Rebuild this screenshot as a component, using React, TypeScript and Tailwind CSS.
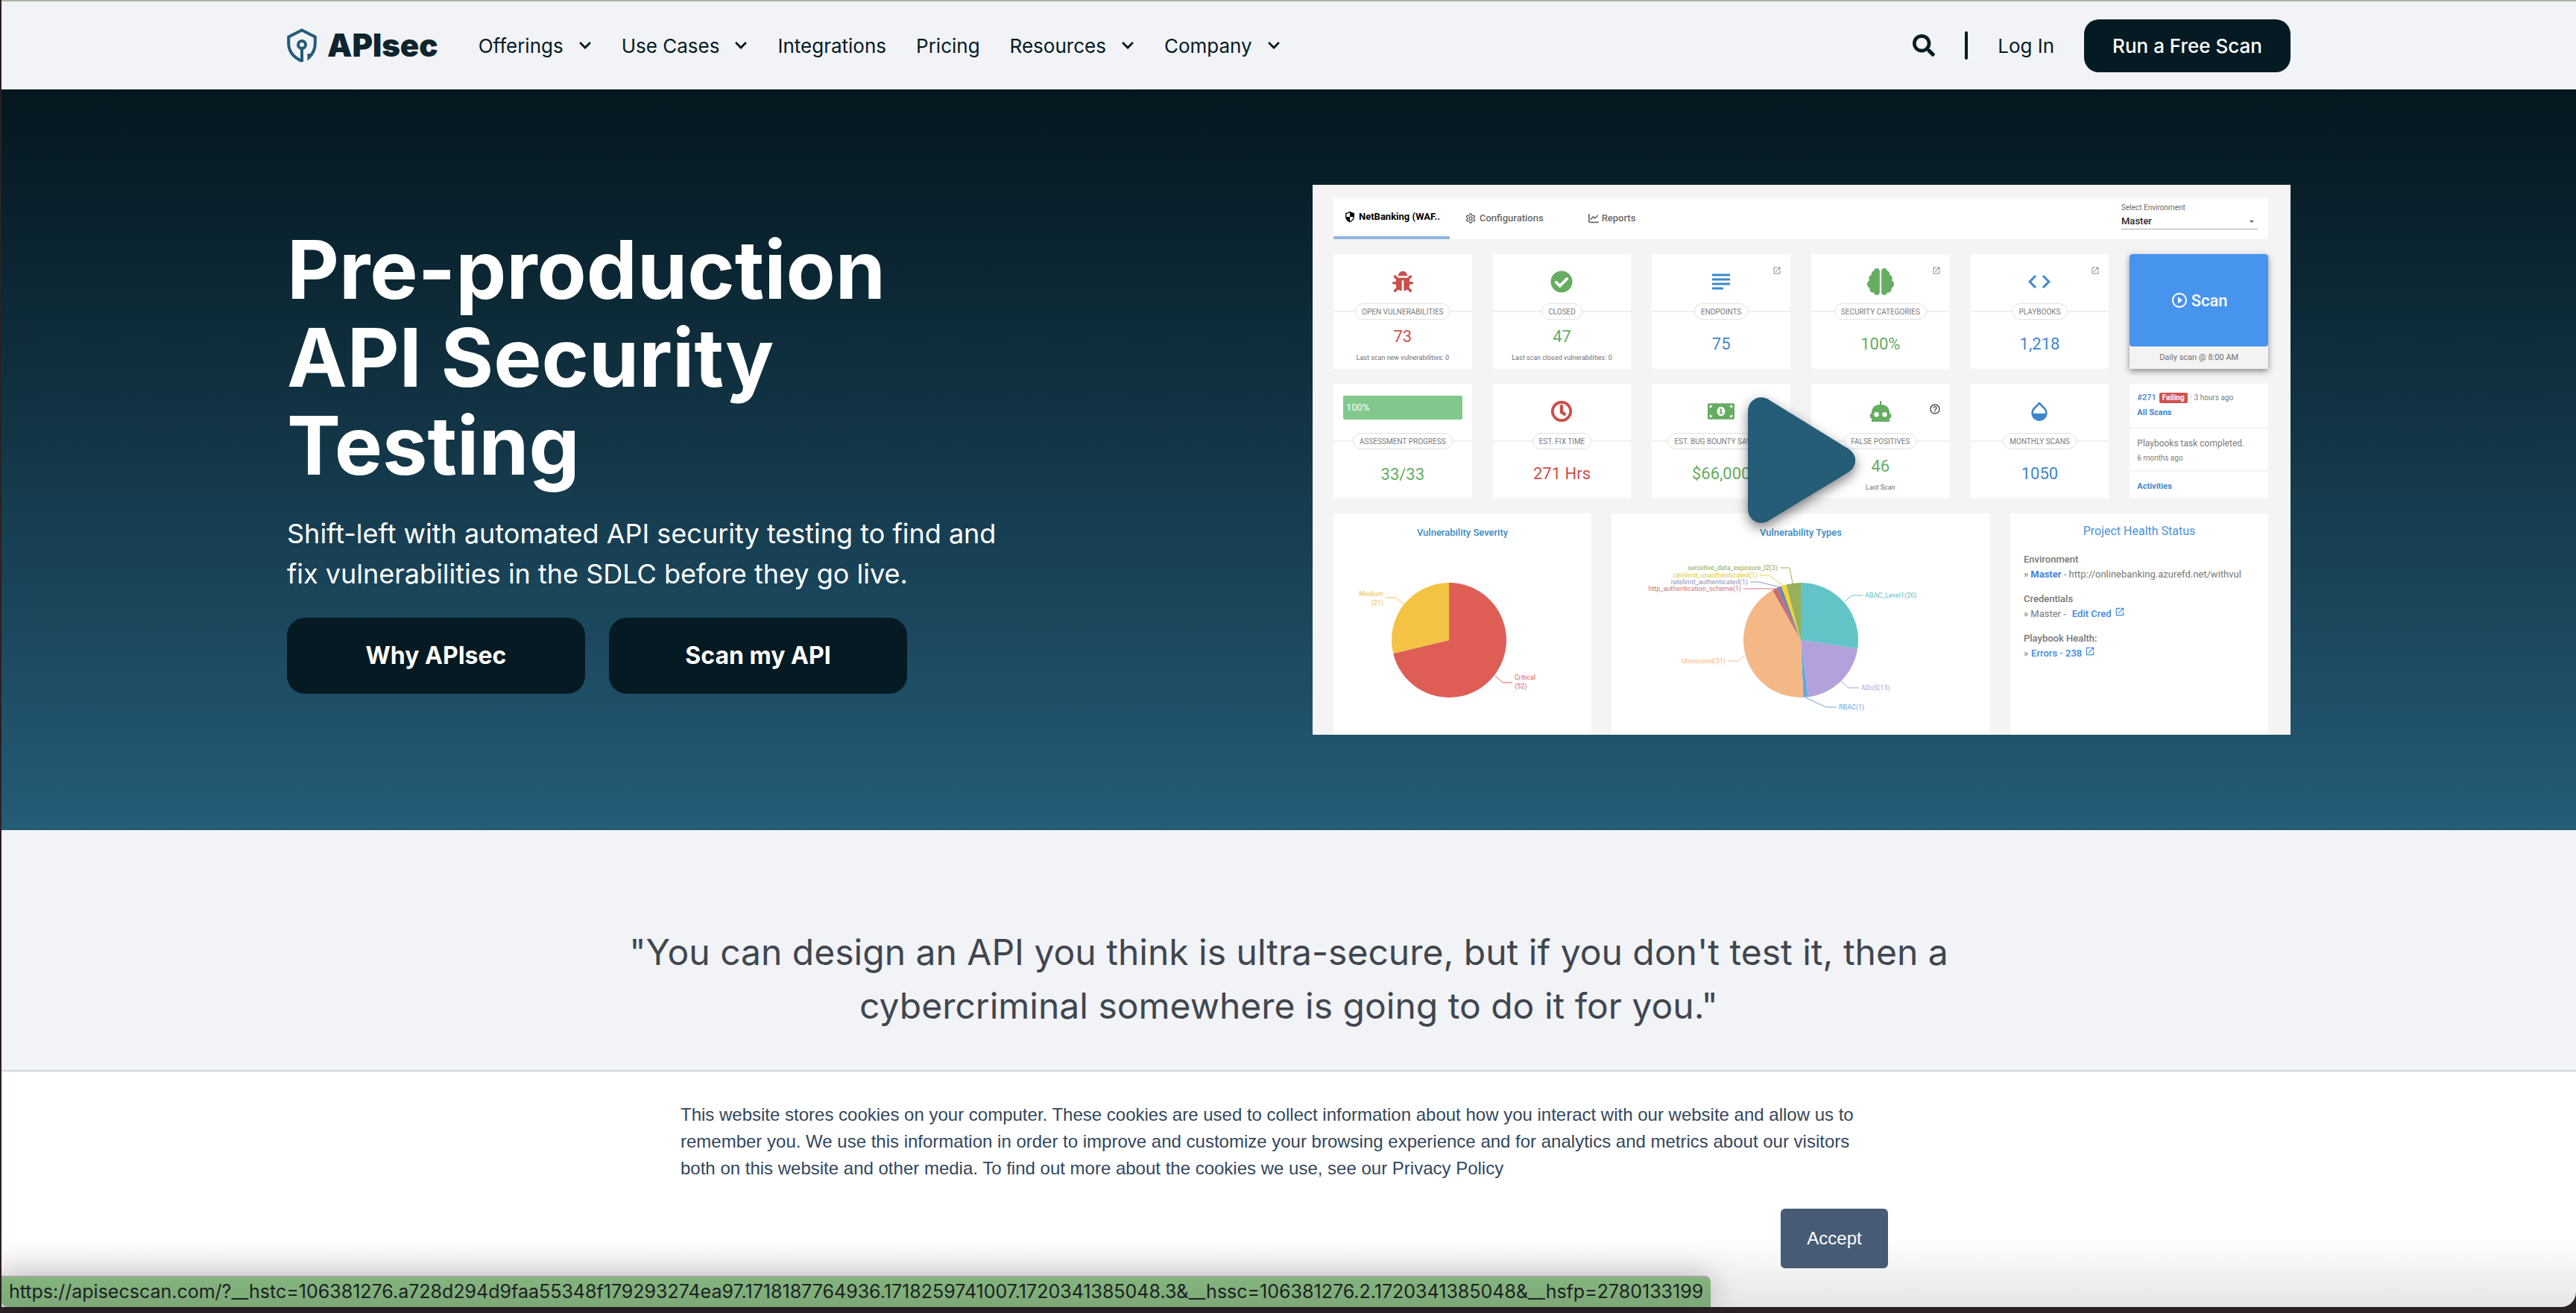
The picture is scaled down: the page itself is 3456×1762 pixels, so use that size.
import type { ReactNode } from "react";
import { FaBug, FaCheckCircle, FaRegClock, FaMoneyBillAlt, FaChevronDown, FaSearch } from "react-icons/fa";
import {
  MdSubject,
  MdCode,
  MdOpacity,
  MdOpenInNew,
  MdSecurity,
  MdOutlineSettings,
  MdHelpOutline,
  MdPlayCircleOutline,
  MdArrowDropDown,
} from "react-icons/md";
import { FaBrain, FaChartLine } from "react-icons/fa6";

const NAV = [
  { label: "Offerings", menu: true },
  { label: "Use Cases", menu: true },
  { label: "Integrations", menu: false },
  { label: "Pricing", menu: false },
  { label: "Resources", menu: true },
  { label: "Company", menu: true },
];

function Logo() {
  return (
    <a href="#" className="flex items-center gap-3.5 text-[#0f242d]">
      <svg viewBox="0 0 40 46" className="h-[46px] w-10" fill="none" stroke="#245b78" strokeWidth="4">
        <path d="M20 44C9 39 2.2 31 2.2 20V11.500L20 2.500L37.800 11.500V20C37.800 29 34 35 29.500 39V34" />
        <circle cx="20" cy="22" r="5" />
        <path d="M20 27V45" />
      </svg>
      <span className="text-[42px] leading-none font-black">APIsec</span>
    </a>
  );
}

function Header() {
  return (
    <header className="border-t-2 border-[#a6b7a2] bg-[#f1f3f7]">
      <div className="mx-auto flex h-[118px] max-w-[2688px] items-center text-[26px] text-[#051a22]">
        <Logo />
        <nav className="ml-[54px] flex items-center gap-10">
          {NAV.map((item) =>
            item.menu ? (
              <button key={item.label} className="flex items-center gap-5">
                {item.label}
                <FaChevronDown className="size-[18px]" />
              </button>
            ) : (
              <a key={item.label} href="#">
                {item.label}
              </a>
            ),
          )}
        </nav>
        <div className="ml-auto flex items-center gap-10">
          <button aria-label="Search">
            <FaSearch className="size-[30px]" />
          </button>
          <span className="h-[38px] w-1 rounded-full bg-[#051a22]" />
          <a href="#">Log In</a>
          <button className="h-[71px] rounded-[20px] bg-[#051a22] px-[38px] font-medium text-white">
            Run a Free Scan
          </button>
        </div>
      </div>
    </header>
  );
}

const GREEN = "text-[#66ad61]";
const RED = "text-[#c9504b]";
const BLUE = "text-[#3f87cc]";

function CardLabel({ children }: { children: ReactNode }) {
  return (
    <div className="flex items-center">
      <span className="h-0.5 flex-1 bg-[#efefef]" />
      <span className="flex h-[22px] items-center rounded-full border border-[#e2e2e2] px-2 text-[10px] whitespace-nowrap text-[#7b7b7b]">
        {children}
      </span>
      <span className="h-0.5 flex-1 bg-[#efefef]" />
    </div>
  );
}

function StatCard({
  icon,
  label,
  value,
  tone,
  note,
  corner,
}: {
  icon: ReactNode;
  label: string;
  value: string;
  tone: string;
  note?: string;
  corner?: ReactNode;
}) {
  return (
    <div className="relative flex flex-col bg-white">
      {corner && <span className="absolute top-4 right-3 text-[#8a8a8a]">{corner}</span>}
      <div className={"flex h-[66px] items-center justify-center pt-2 " + tone}>{icon}</div>
      <CardLabel>{label}</CardLabel>
      <div className="flex h-[66px] flex-col items-center justify-center">
        <span className={"text-[22px] leading-9 " + tone}>{value}</span>
        {note && <span className="text-[9px] leading-5 text-[#6f6f6f]">{note}</span>}
      </div>
    </div>
  );
}

function RobotIcon() {
  return (
    <svg viewBox="0 0 30 28" className="h-7 w-[30px]" fill="currentColor">
      <path
        fillRule="evenodd"
        d="M14 0h2v5h1a10 10 0 0 1 10 9v3h2v6h-2v4a1 1 0 0 1-1 1H4a1 1 0 0 1-1-1v-4H1v-6h2v-3a10 10 0 0 1 10-9h1zM9.500 15a3.200 3.200 0 1 0 0 6.400a3.200 3.200 0 0 0 0-6.400zm11 0a3.200 3.200 0 1 0 0 6.400a3.200 3.200 0 0 0 0-6.400z"
      />
    </svg>
  );
}

type Slice = { value: number; color: string };

function Pie({ cx, cy, r, slices }: { cx: number; cy: number; r: number; slices: Slice[] }) {
  const total = slices.reduce((sum, s) => sum + s.value, 0);
  let from = 0;
  return (
    <g>
      {slices.map((s, i) => {
        const a = (from / total) * 2 * Math.PI;
        from += s.value;
        const b = (from / total) * 2 * Math.PI;
        const large = b - a > Math.PI ? 1 : 0;
        const p = (t: number) => `${cx + r * Math.sin(t)} ${cy - r * Math.cos(t)}`;
        return <path key={i} fill={s.color} d={`M${cx} ${cy}L${p(a)}A${r} ${r} 0 ${large} 1 ${p(b)}Z`} />;
      })}
    </g>
  );
}

function SeverityChart() {
  return (
    <svg viewBox="0 0 346 240" className="w-full" fontSize="9">
      <Pie
        cx={155}
        cy={134}
        r={77}
        slices={[
          { value: 52, color: "#de5e56" },
          { value: 21, color: "#f4c343" },
        ]}
      />
      <g fill="none" strokeWidth="1">
        <path stroke="#f4c343" d="M70 77h14l11 9" />
        <path stroke="#de5e56" d="M217 182l10 9h13" />
      </g>
      <g fill="#ecc04d" textAnchor="end">
        <text x="67" y="75">Medium</text>
        <text x="67" y="87">(21)</text>
      </g>
      <g fill="#de5e56">
        <text x="243" y="187">Critical</text>
        <text x="243" y="199">(52)</text>
      </g>
    </svg>
  );
}

function TypesChart() {
  return (
    <svg viewBox="0 0 508 240" className="w-full" fontSize="9">
      <Pie
        cx={254}
        cy={134}
        r={77}
        slices={[
          { value: 20, color: "#62c4c6" },
          { value: 15, color: "#b2a1da" },
          { value: 1, color: "#67a7e0" },
          { value: 31, color: "#f3b886" },
          { value: 1, color: "#c96a70" },
          { value: 1, color: "#7b83a8" },
          { value: 1, color: "#efd62f" },
          { value: 3, color: "#98b05a" },
        ]}
      />
      <g fill="none" strokeWidth="1">
        <path stroke="#98b05a" d="M226 37h13l4 21" />
        <path stroke="#e5d24a" d="M199 47h12l20 14" />
        <path stroke="#8d93b8" d="M186 56h12l28 7" />
        <path stroke="#d0757b" d="M177 65h44" />
        <path stroke="#f3b886" d="M157 162h13l8-7" />
        <path stroke="#62c4c6" d="M313 82l10-8h14" />
        <path stroke="#b2a1da" d="M308 189l10 9h14" />
        <path stroke="#67a7e0" d="M260 211l28 13h14" />
      </g>
      <g textAnchor="end">
        <text x="223" y="40" fill="#8fa656">sensitive_data_exposure_l2(3)</text>
        <text x="196" y="50" fill="#dccb3c">ratelimit_unauthenticated(1)</text>
        <text x="183" y="59" fill="#8d93b8">ratelimit_authenticated(1)</text>
        <text x="174" y="68" fill="#d0757b">http_authentication_scheme(1)</text>
        <text x="153" y="165" fill="#f0b584">Unsecured(31)</text>
      </g>
      <text x="340" y="77" fill="#5cc0c2">ABAC_Level1(20)</text>
      <text x="335" y="201" fill="#b2a1da">ADoS(15)</text>
      <text x="305" y="227" fill="#67a7e0">RBAC(1)</text>
    </svg>
  );
}

function Dashboard() {
  const open = <MdOpenInNew className="size-3" />;
  return (
    <div className="relative flex aspect-video w-full flex-col overflow-hidden bg-[#f4f4f4] pt-[17px] pr-[30px] pl-7 font-[Roboto,sans-serif]">
      <div className="flex h-14 shrink-0 items-stretch bg-white text-[13px] text-[#6a6a6a]">
        <a href="#" className="flex w-[156px] items-center gap-1 border-b-4 border-[#8fb5de] pl-3.5 font-bold text-black">
          <MdSecurity className="size-4" />
          NetBanking (WAF..
        </a>
        <a href="#" className="ml-5 flex items-center gap-1 font-medium">
          <MdOutlineSettings className="size-4" />
          Configurations
        </a>
        <a href="#" className="ml-[60px] flex items-center gap-1 font-medium">
          <FaChartLine className="size-3.5" />
          Reports
        </a>
        <div className="mr-3.5 ml-auto flex w-[183px] flex-col pt-1.5">
          <label htmlFor="environment" className="text-[10px] leading-4">
            Select Environment
          </label>
          <div className="relative border-b border-[#a8a8a8]">
            <select id="environment" className="w-full appearance-none text-[13px] leading-5 font-medium text-[#2b2b2b]">
              <option>Master</option>
            </select>
            <MdArrowDropDown className="pointer-events-none absolute top-0.5 right-0 size-4" />
          </div>
        </div>
      </div>

      <div className="mt-5 grid grid-cols-6 gap-x-7 gap-y-5">
        <StatCard icon={<FaBug className="size-7" />} label="OPEN VULNERABILITIES" value="73" tone={RED} note="Last scan new vulnerabilities: 0" />
        <StatCard icon={<FaCheckCircle className="size-[30px]" />} label="CLOSED" value="47" tone={GREEN} note="Last scan closed vulnerabilities: 0" />
        <StatCard icon={<MdSubject className="size-9" />} label="ENDPOINTS" value="75" tone={BLUE} corner={open} />
        <StatCard icon={<FaBrain className="size-9" />} label="SECURITY CATEGORIES" value="100%" tone={GREEN} corner={open} />
        <StatCard icon={<MdCode className="size-9" />} label="PLAYBOOKS" value="1,218" tone={BLUE} corner={open} />
        <div className="flex flex-col bg-[#f3f3f3] text-center shadow-[0_3px_8px_rgba(0,0,0,0.45)]">
          <button className="flex flex-1 items-center justify-center gap-1 rounded-sm bg-[#4794ee] text-[22px] font-medium text-white">
            <MdPlayCircleOutline className="size-6" />
            Scan
          </button>
          <span className="text-[11px] leading-[30px] text-[#6f6f6f]">Daily scan @ 8:00 AM</span>
        </div>

        <div className="flex flex-col bg-white">
          <div className="flex h-[66px] items-start px-[13px] pt-4">
            <div className="h-8 w-full rounded-xs bg-[#82c88c] px-1 text-[13px] leading-8 text-white">100%</div>
          </div>
          <CardLabel>ASSESSMENT PROGRESS</CardLabel>
          <div className={"flex h-[66px] items-center justify-center text-[22px] " + GREEN}>33/33</div>
        </div>
        <StatCard
          icon={<FaRegClock className="size-7" stroke="currentColor" strokeWidth="24" />}
          label="EST. FIX TIME"
          value="271 Hrs"
          tone={RED}
        />
        <StatCard icon={<FaMoneyBillAlt className="size-9" />} label="EST. BUG BOUNTY SAVINGS" value="$66,000" tone={GREEN} />
        <StatCard
          icon={<RobotIcon />}
          label="FALSE POSITIVES"
          value="46"
          tone={GREEN}
          note="Last Scan"
          corner={<MdHelpOutline className="mt-2.5 size-4 text-[#444]" />}
        />
        <StatCard icon={<MdOpacity className="size-8" />} label="MONTHLY SCANS" value="1050" tone={BLUE} />
        <div className="flex flex-col divide-y-2 divide-[#f4f4f4] bg-white text-[11px] text-[#7b7b7b]">
          <div className="flex h-[60px] flex-col justify-center px-2.5 leading-5">
            <span className="flex items-center gap-1 text-[10px]">
              <a href="#" className="text-[11px] font-medium text-[#3f87cc]">#271</a>
              <span className="rounded-xs bg-[#d2504b] px-1 leading-3.5 font-bold text-white">Failing</span>
              · 3 hours ago
            </span>
            <a href="#" className="font-bold text-[#3f87cc]">All Scans</a>
          </div>
          <div className="flex h-[58px] flex-col justify-center px-2.5 pt-1 leading-5">
            <span className="text-[12px]">Playbooks task completed.</span>
            <span className="text-[10px]">6 months ago</span>
          </div>
          <div className="flex flex-1 items-center px-2.5 pt-1">
            <a href="#" className="font-bold text-[#3f87cc]">Activities</a>
          </div>
        </div>
      </div>

      <div className="mt-5 flex flex-1 gap-[27px]">
        <section className="w-[346px] bg-white pt-4 text-center">
          <h3 className="text-[13px] leading-5 font-medium text-[#3b8ac4]">Vulnerability Severity</h3>
          <SeverityChart />
        </section>
        <section className="w-[508px] bg-white pt-4 text-center">
          <h3 className="text-[13px] leading-5 font-medium text-[#3b8ac4]">Vulnerability Types</h3>
          <TypesChart />
        </section>
        <section className="flex-1 bg-white px-[18px] pt-3.5 text-[13px] leading-5 whitespace-nowrap text-[#777]">
          <h3 className="text-center text-[16px] leading-5 text-[#4a93da]">Project Health Status</h3>
          <h4 className="mt-[18px] font-medium">Environment</h4>
          <p>
            » <a href="#" className="font-bold text-[#3f87dc]">Master</a> - http://onlinebanking.azurefd.net/withvul
          </p>
          <h4 className="mt-[13px] font-medium">Credentials</h4>
          <p className="flex items-center gap-1">
            » Master -{" "}
            <a href="#" className="ml-1 flex items-start gap-1 font-medium text-[#3f87dc]">
              Edit Cred <MdOpenInNew className="size-3.5" />
            </a>
          </p>
          <h4 className="mt-[13px] font-medium">Playbook Health:</h4>
          <p className="flex items-center gap-1">
            »{" "}
            <a href="#" className="flex items-start gap-1 font-medium text-[#3f87dc]">
              Errors - 238 <MdOpenInNew className="size-3.5" />
            </a>
          </p>
        </section>
      </div>

      <button aria-label="Play video" className="absolute inset-0 flex items-center justify-center">
        <svg viewBox="0 0 144 169" className="h-[169px] w-36 drop-shadow-[0_6px_8px_rgba(0,0,0,0.5)]">
          <path
            fill="#255c78"
            d="M0 19C0 3 17-5 29 4L136 70C147 78 147 92 136 100L29 165C17 174 0 166 0 150Z"
          />
        </svg>
      </button>
    </div>
  );
}

function Hero() {
  const cta = "h-[102px] w-[400px] rounded-3xl bg-[#051a22] text-[32px] font-bold text-white";
  return (
    <section className="bg-linear-to-b from-[#05171f] to-[#255c78] py-32">
      <div className="mx-auto grid max-w-[2688px] grid-cols-2 items-center gap-16 text-white">
        <div className="flex flex-col gap-8">
          <h1 className="text-[108px] leading-[118px] font-bold">
            Pre-production
            <br />
            API Security
            <br />
            Testing
          </h1>
          <p className="max-w-[1000px] text-[36px] leading-[54px]">
            Shift-left with automated API security testing to find and fix vulnerabilities in the SDLC before they go live.
          </p>
          <div className="flex gap-8">
            <button className={cta}>Why APIsec</button>
            <button className={cta}>Scan my API</button>
          </div>
        </div>
        <Dashboard />
      </div>
    </section>
  );
}

function CookieBanner() {
  return (
    <section
      aria-label="Cookies"
      className="flex-1 rounded-br-[20px] border-t-2 border-[#cbd6e2] bg-linear-to-b from-white from-70% to-[#e6e6e6] pt-10 pb-[52px] font-['Liberation_Sans',Arial,sans-serif] text-[24px] leading-9 text-[#33475b]"
    >
      <div className="mx-auto flex max-w-[1632px] flex-col">
        <p className="max-w-[1610px]">
          This website stores cookies on your computer. These cookies are used to collect information about how you
          interact with our website and allow us to remember you. We use this information in order to improve and
          customize your browsing experience and for analytics and metrics about our visitors both on this website and
          other media. To find out more about the cookies we use, see our Privacy Policy
        </p>
        <button className="mt-9 mr-3 h-20 w-36 self-end rounded-md bg-[#475b75] text-white">Accept</button>
      </div>
    </section>
  );
}

export default function App() {
  return (
    <div className="relative flex min-h-screen flex-col bg-[#2a2125] pb-2 pl-0.5 font-[Inter,sans-serif]">
      <Header />
      <Hero />
      <section className="bg-[#f1f3f7] pt-32 pb-[50px]">
        <blockquote className="mx-auto max-w-[1800px] text-center text-[48px] leading-[72px] text-[#40464f]">
          "You can design an API you think is ultra-secure, but if you don't test it, then a cybercriminal somewhere is
          going to do it for you."
        </blockquote>
      </section>
      <CookieBanner />
      <div className="absolute bottom-2 left-0.5 flex h-[42px] items-center rounded-tr-lg rounded-bl-lg border-t-2 border-[#a9a3a6] bg-linear-to-b from-[#84b57e] to-[#7ca877] px-2.5 text-[25px] whitespace-nowrap text-[#1d2024] shadow-[0_0_40px_rgba(0,0,0,0.25)]">
        https://apisecscan.com/?__hstc=106381276.a728d294d9faa55348f179293274ea97.1718187764936.1718259741007.1720341385048.3&__hssc=106381276.2.1720341385048&__hsfp=2780133199
      </div>
    </div>
  );
}
